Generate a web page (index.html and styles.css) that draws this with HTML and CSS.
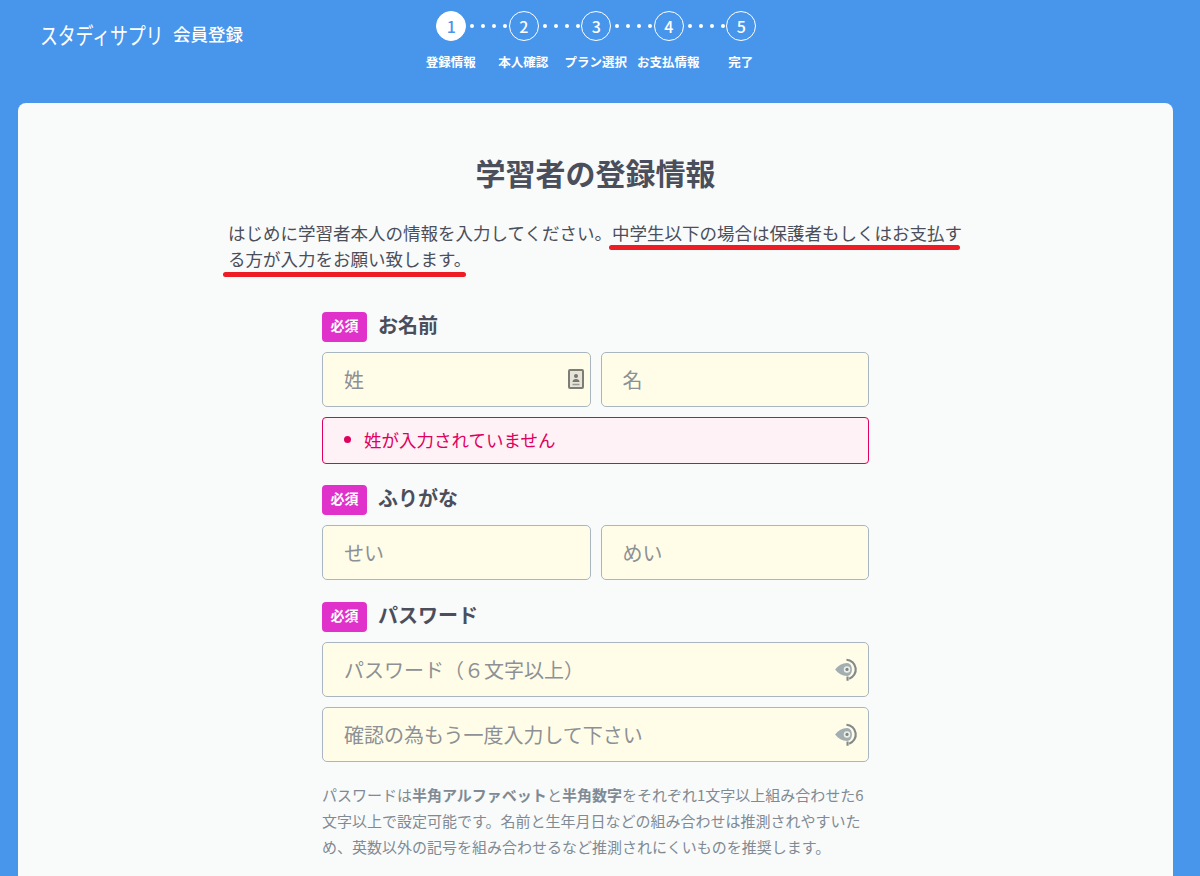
FILE: index.html
```html
<!DOCTYPE html>
<html lang="ja">
<head>
<meta charset="utf-8">
<title>スタディサプリ 会員登録</title>
<link rel="stylesheet" href="styles.css">
</head>
<body>
<header class="header">
  <div class="brand">
    <span class="logo">スタディサプリ</span>
    <span class="brand-sub">会員登録</span>
  </div>
  <ol class="steps">
    <li class="step is-current"><div class="step-track"><span class="step-num">1</span><span class="dots"><i></i><i></i><i></i><i></i></span></div><span class="step-label">登録情報</span></li>
    <li class="step"><div class="step-track"><span class="step-num">2</span><span class="dots"><i></i><i></i><i></i><i></i></span></div><span class="step-label">本人確認</span></li>
    <li class="step"><div class="step-track"><span class="step-num">3</span><span class="dots"><i></i><i></i><i></i><i></i></span></div><span class="step-label">プラン選択</span></li>
    <li class="step"><div class="step-track"><span class="step-num">4</span><span class="dots"><i></i><i></i><i></i><i></i></span></div><span class="step-label">お支払情報</span></li>
    <li class="step"><div class="step-track"><span class="step-num">5</span></div><span class="step-label">完了</span></li>
  </ol>
</header>
<main class="card">
  <h1 class="title">学習者の登録情報</h1>
  <div class="intro">
    <p class="intro-text">はじめに学習者本人の情報を入力してください。中学生以下の場合は保護者もしくはお支払する方が入力をお願い致します。</p>
    <span class="scribble scribble-one"></span>
    <span class="scribble scribble-two"></span>
  </div>
  <form class="form">
    <div class="field-label label-name"><span class="badge">必須</span><span class="label-text">お名前</span></div>
    <div class="row">
      <div class="input-wrap">
        <input class="input" type="text" placeholder="姓">
        <svg class="icon-contact" viewBox="0 0 16 20" aria-hidden="true"><rect x="1" y="1" width="14" height="18" rx="1" fill="#e6e4d6" stroke="#7d7d78" stroke-width="2"/><circle cx="8" cy="7" r="2" fill="#77776f"/><path d="M4.500 13c0-2 1.500-3 3.500-3s3.500 1 3.500 3z" fill="#77776f"/><path d="M4.500 15.500h7" stroke="#9a9a92" stroke-width="1.500"/></svg>
      </div>
      <div class="input-wrap"><input class="input" type="text" placeholder="名"></div>
    </div>
    <div class="error"><i class="error-dot"></i>姓が入力されていません</div>

    <div class="field-label label-kana"><span class="badge">必須</span><span class="label-text">ふりがな</span></div>
    <div class="row">
      <div class="input-wrap"><input class="input" type="text" placeholder="せい"></div>
      <div class="input-wrap"><input class="input" type="text" placeholder="めい"></div>
    </div>

    <div class="field-label label-pass"><span class="badge">必須</span><span class="label-text">パスワード</span></div>
    <div class="stack">
      <div class="input-wrap">
        <input class="input" type="text" placeholder="パスワード（６文字以上）">
        <svg class="icon-eye" viewBox="0 0 24 24" aria-hidden="true"><path d="M1 11.500 C4 7.500 7.500 5.500 12 5.500 C15 5.500 16.500 8.500 16.500 11.500 C16.500 14.500 15 17.500 12 17.500 C7.500 17.500 4 15.500 1 11.500Z" fill="#a3aeb2"/><circle cx="12" cy="11.500" r="3" fill="#eef0e6"/><circle cx="12" cy="11.500" r="1.500" fill="#7c8588"/><path d="M11.500 2.500 A9 9 0 0 1 14 20 M12.500 18v4" fill="none" stroke="#85898a" stroke-width="2"/></svg>
      </div>
      <div class="input-wrap">
        <input class="input" type="text" placeholder="確認の為もう一度入力して下さい">
        <svg class="icon-eye" viewBox="0 0 24 24" aria-hidden="true"><path d="M1 11.500 C4 7.500 7.500 5.500 12 5.500 C15 5.500 16.500 8.500 16.500 11.500 C16.500 14.500 15 17.500 12 17.500 C7.500 17.500 4 15.500 1 11.500Z" fill="#a3aeb2"/><circle cx="12" cy="11.500" r="3" fill="#eef0e6"/><circle cx="12" cy="11.500" r="1.500" fill="#7c8588"/><path d="M11.500 2.500 A9 9 0 0 1 14 20 M12.500 18v4" fill="none" stroke="#85898a" stroke-width="2"/></svg>
      </div>
    </div>
    <p class="note">パスワードは<b>半角アルファベット</b>と<b>半角数字</b>をそれぞれ1文字以上組み合わせた6文字以上で設定可能です。名前と生年月日などの組み合わせは推測されやすいため、英数以外の記号を組み合わせるなど推測されにくいものを推奨します。</p>
  </form>
</main>
</body>
</html>
```
FILE: styles.css
```css
* { box-sizing: border-box; }
html, body { margin: 0; height: 100%; }
body {
  display: flex;
  flex-direction: column;
  height: 876px;
  overflow: hidden;
  background: #4896ec;
  color: #4a4f5b;
  font-family: "Noto Sans CJK JP", "Noto Sans", sans-serif;
}
.header {
  display: flex;
  flex: 0 0 103px;
  align-items: flex-start;
  color: #fff;
}
.brand {
  display: flex;
  flex: 0 0 415px;
  align-items: center;
  gap: 11px;
  padding: 20px 0 0 40px;
}
.logo {
  width: 122px;
  font-size: 18px;
  line-height: 28px;
  letter-spacing: -0.2px;
  white-space: nowrap;
  transform: scaleY(1.25);
}
.brand-sub { font-size: 17.500px; font-weight: 500; line-height: 28px; }
.steps {
  display: flex;
  margin: 0;
  padding: 11px 0 0;
  list-style: none;
}
.step { width: 72.500px; display: flex; flex-direction: column; align-items: center; }
.step-track { position: relative; width: 30px; height: 30px; }
.step-num {
  display: flex;
  width: 30px;
  height: 30px;
  padding-bottom: 1px;
  align-items: center;
  justify-content: center;
  border: 1px solid #fff;
  border-radius: 50%;
  font-size: 16px;
  line-height: 1;
  font-weight: 500;
}
.is-current .step-num { background: #fff; color: #4896ec; }
.dots {
  position: absolute;
  top: 13px;
  left: 34px;
  display: flex;
  gap: 7px;
}
.dots i { width: 4px; height: 4px; border-radius: 50%; background: #fff; }
.step-label {
  margin: 11px 1px 0 0;
  font-size: 12.500px;
  font-weight: 700;
  line-height: 20px;
  white-space: nowrap;
}
.card {
  flex: 1;
  width: 1155px;
  margin-left: 18px;
  padding-top: 47px;
  background: #f9fafa;
  border-radius: 8px 8px 0 0;
}
.title {
  margin: 0;
  font-size: 30px;
  font-weight: 700;
  line-height: 44px;
  text-align: center;
}
.intro { position: relative; width: 738px; margin: 26px 0 0 210px; }
.intro-text { margin: 0; font-size: 17.500px; line-height: 26px; }
.scribble {
  position: absolute;
  height: 5px;
  background: #ee1c25;
  border-radius: 3px;
}
.scribble-one { left: 381px; top: 25px; width: 351px; }
.scribble-two { left: -5px; top: 52px; width: 243px; }
.form { width: 547px; margin: 0 0 0 304px; }
.field-label { display: flex; align-items: center; gap: 11px; height: 30px; margin-bottom: 10px; }
.label-name { margin-top: 40px; }
.label-kana { margin-top: 21px; }
.label-pass { margin-top: 22px; }
.badge {
  width: 45px;
  height: 30px;
  background: #e031cb;
  border-radius: 4px;
  color: #fff;
  font-size: 14px;
  font-weight: 700;
  line-height: 27px;
  text-align: center;
}
.label-text { font-size: 20px; font-weight: 700; line-height: 26px; margin-top: -5px; }
.row { display: flex; gap: 10px; }
.stack { display: flex; flex-direction: column; gap: 10px; }
.input-wrap { position: relative; flex: 1; }
.input {
  display: block;
  width: 100%;
  height: 55px;
  padding: 0 21px;
  background: #fffde8;
  border: 1px solid #a9b6c1;
  border-radius: 5px;
  color: #4a4f5b;
  font: 20px "Noto Sans CJK JP", "Noto Sans", sans-serif;
  outline: none;
}
.input::placeholder { color: #8d9094; opacity: 1; }
.icon-contact { position: absolute; top: 17px; right: 7px; width: 16px; height: 20px; }
.icon-eye { position: absolute; top: 15px; right: 9px; width: 26px; height: 26px; }
.error {
  display: flex;
  align-items: center;
  height: 47px;
  margin-top: 10px;
  padding: 0 0 2px 21px;
  background: #fff2f7;
  border: 1px solid #e0005e;
  border-radius: 4px;
  color: #e0005e;
  font-size: 17.500px;
}
.error-dot { width: 7px; height: 7px; margin-right: 13px; border-radius: 50%; background: #e0005e; }
.note { margin: 20px 0 0; color: #7f8a94; font-size: 15px; line-height: 26px; }
.note b { font-weight: 700; }
```
